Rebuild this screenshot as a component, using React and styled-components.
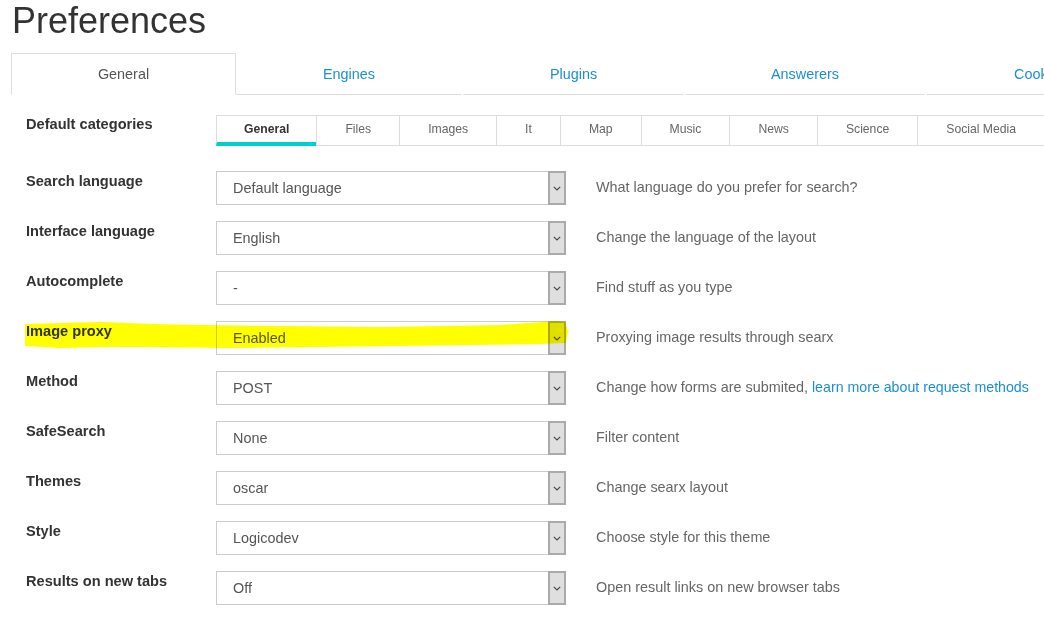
import React from 'react';
import styled, { createGlobalStyle } from 'styled-components';

const GlobalStyle = createGlobalStyle`
  html, body {
    margin: 0;
    padding: 0;
    background: #fff;
    overflow: hidden;
  }
  body {
    font-family: "Liberation Sans", Arial, sans-serif;
    color: #333;
  }
`

const Pagina = styled.div`
  width: 1200px;
  padding: 1px 0 0 11px;
`

const Titulo = styled.h1`
  margin: 0 0 12px 1px;
  font-size: 36px;
  line-height: 40px;
  font-weight: normal;
  color: #333;
`

const Abas = styled.div`
  display: flex;
`

const Aba = styled.div`
  box-sizing: border-box;
  width: ${p => p.largura}px;
  height: 42px;
  display: flex;
  align-items: center;
  justify-content: center;
  font-size: 14.4px;
  color: ${p => (p.ativa ? '#555' : '#1a8fd6')};
  border: 1px solid ${p => (p.ativa ? '#ddd' : 'transparent')};
  border-bottom: 1px solid ${p => (p.ativa ? 'transparent' : '#ddd')};
  margin-right: ${p => (p.ativa ? 0 : 1)}px;
`

const Formulario = styled.div`
  padding: 19px 0 0 15px;
`

const LinhaCategorias = styled.div`
  display: flex;
  align-items: flex-start;
  margin: 0 0 26px;
`

const Rotulo = styled.div`
  width: 190px;
  flex-shrink: 0;
  font-size: 14.6px;
  line-height: 20px;
  font-weight: bold;
  color: #333;
`

const Categorias = styled.div`
  display: flex;
  margin-top: 1px;
  margin-bottom: -1px;
`

const Categoria = styled.div`
  box-sizing: border-box;
  height: 31px;
  padding: 0 ${p => (p.ativa ? 27 : 28)}px 3px;
  display: flex;
  align-items: center;
  white-space: nowrap;
  font-size: 12.2px;
  font-weight: ${p => (p.ativa ? 'bold' : 'normal')};
  color: ${p => (p.ativa ? '#333' : '#666')};
  border-top: 1px solid #ddd;
  border-left: 1px solid #ddd;
  border-bottom: ${p => (p.ativa ? '4px solid #00cfcc' : '1px solid #ddd')};
  padding-bottom: ${p => (p.ativa ? 0 : 3)}px;
`

const Linha = styled.div`
  position: relative;
  display: flex;
  align-items: flex-start;
  height: 50px;
`

const Seletor = styled.div`
  box-sizing: border-box;
  width: 350px;
  height: 34px;
  flex-shrink: 0;
  display: flex;
  align-items: center;
  border: 1px solid #ccc;
  font-size: 14.4px;
  color: #555;
`

const ValorSeletor = styled.div`
  flex: 1;
  padding-left: 16px;
`

const Seta = styled.div`
  box-sizing: border-box;
  width: 18px;
  height: 34px;
  margin: -1px -1px -1px 0;
  background: #dfdfdf;
  border: 2px solid #aaa;
  display: flex;
  align-items: center;
  justify-content: center;
`

const Descricao = styled.div`
  padding: 6px 0 0 30px;
  font-size: 14.4px;
  line-height: 20px;
  color: #666;
  white-space: nowrap;
`

const Link = styled.a`
  color: #1a8fd6;
  text-decoration: none;
  font-size: 14.2px;
`

const Marca = styled.svg`
  position: absolute;
  left: -2px;
  top: -2px;
  mix-blend-mode: multiply;
  pointer-events: none;
`

const abas = [
  { nome: 'General', largura: 225, ativa: true },
  { nome: 'Engines', largura: 226 },
  { nome: 'Plugins', largura: 221 },
  { nome: 'Answerers', largura: 240 },
  { nome: 'Cookies', largura: 228 },
]

const categorias = ['General', 'Files', 'Images', 'It', 'Map', 'Music', 'News', 'Science', 'Social Media', 'Videos']

const opcoes = [
  { rotulo: 'Search language', valor: 'Default language', desc: 'What language do you prefer for search?' },
  { rotulo: 'Interface language', valor: 'English', desc: 'Change the language of the layout' },
  { rotulo: 'Autocomplete', valor: '-', desc: 'Find stuff as you type' },
  { rotulo: 'Image proxy', valor: 'Enabled', desc: 'Proxying image results through searx', marca: true },
  { rotulo: 'Method', valor: 'POST', desc: 'Change how forms are submited, ', link: 'learn more about request methods' },
  { rotulo: 'SafeSearch', valor: 'None', desc: 'Filter content' },
  { rotulo: 'Themes', valor: 'oscar', desc: 'Change searx layout' },
  { rotulo: 'Style', valor: 'Logicodev', desc: 'Choose style for this theme' },
  { rotulo: 'Results on new tabs', valor: 'Off', desc: 'Open result links on new browser tabs' },
]

function Chevron() {
  return (
    <svg width="8" height="5" viewBox="0 0 8 5">
      <polyline points="0.8,0.8 4,4 7.2,0.8" fill="none" stroke="#444" strokeWidth="1.1" />
    </svg>
  )
}

function MarcaTexto() {
  return (
    <Marca width="548" height="34" viewBox="0 0 548 34">
      <polygon
        fill="#ffff00"
        points="1,5 40,4 76,3 130,5 176,6 260,7 356,8 420,7 476,6 532,2 541,3 544,12 542,24 516,25 450,26 376,27 290,28 206,29 126,28 80,28 36,29 1,27"
      />
    </Marca>
  )
}

export default function App() {
  return (
    <Pagina>
      <GlobalStyle />
      <Titulo>Preferences</Titulo>

      <Abas>
        {abas.map(a => (
          <Aba key={a.nome} largura={a.largura} ativa={a.ativa}>{a.nome}</Aba>
        ))}
      </Abas>

      <Formulario>
        <LinhaCategorias>
          <Rotulo>Default categories</Rotulo>
          <Categorias>
            {categorias.map((c, i) => (
              <Categoria key={c} ativa={i === 0}>{c}</Categoria>
            ))}
          </Categorias>
        </LinhaCategorias>

        {opcoes.map(o => (
          <Linha key={o.rotulo}>
            <Rotulo>{o.rotulo}</Rotulo>
            <Seletor>
              <ValorSeletor>{o.valor}</ValorSeletor>
              <Seta><Chevron /></Seta>
            </Seletor>
            <Descricao>
              {o.desc}
              {o.link && <Link href="#">{o.link}</Link>}
            </Descricao>
            {o.marca && <MarcaTexto />}
          </Linha>
        ))}
      </Formulario>
    </Pagina>
  )
}
